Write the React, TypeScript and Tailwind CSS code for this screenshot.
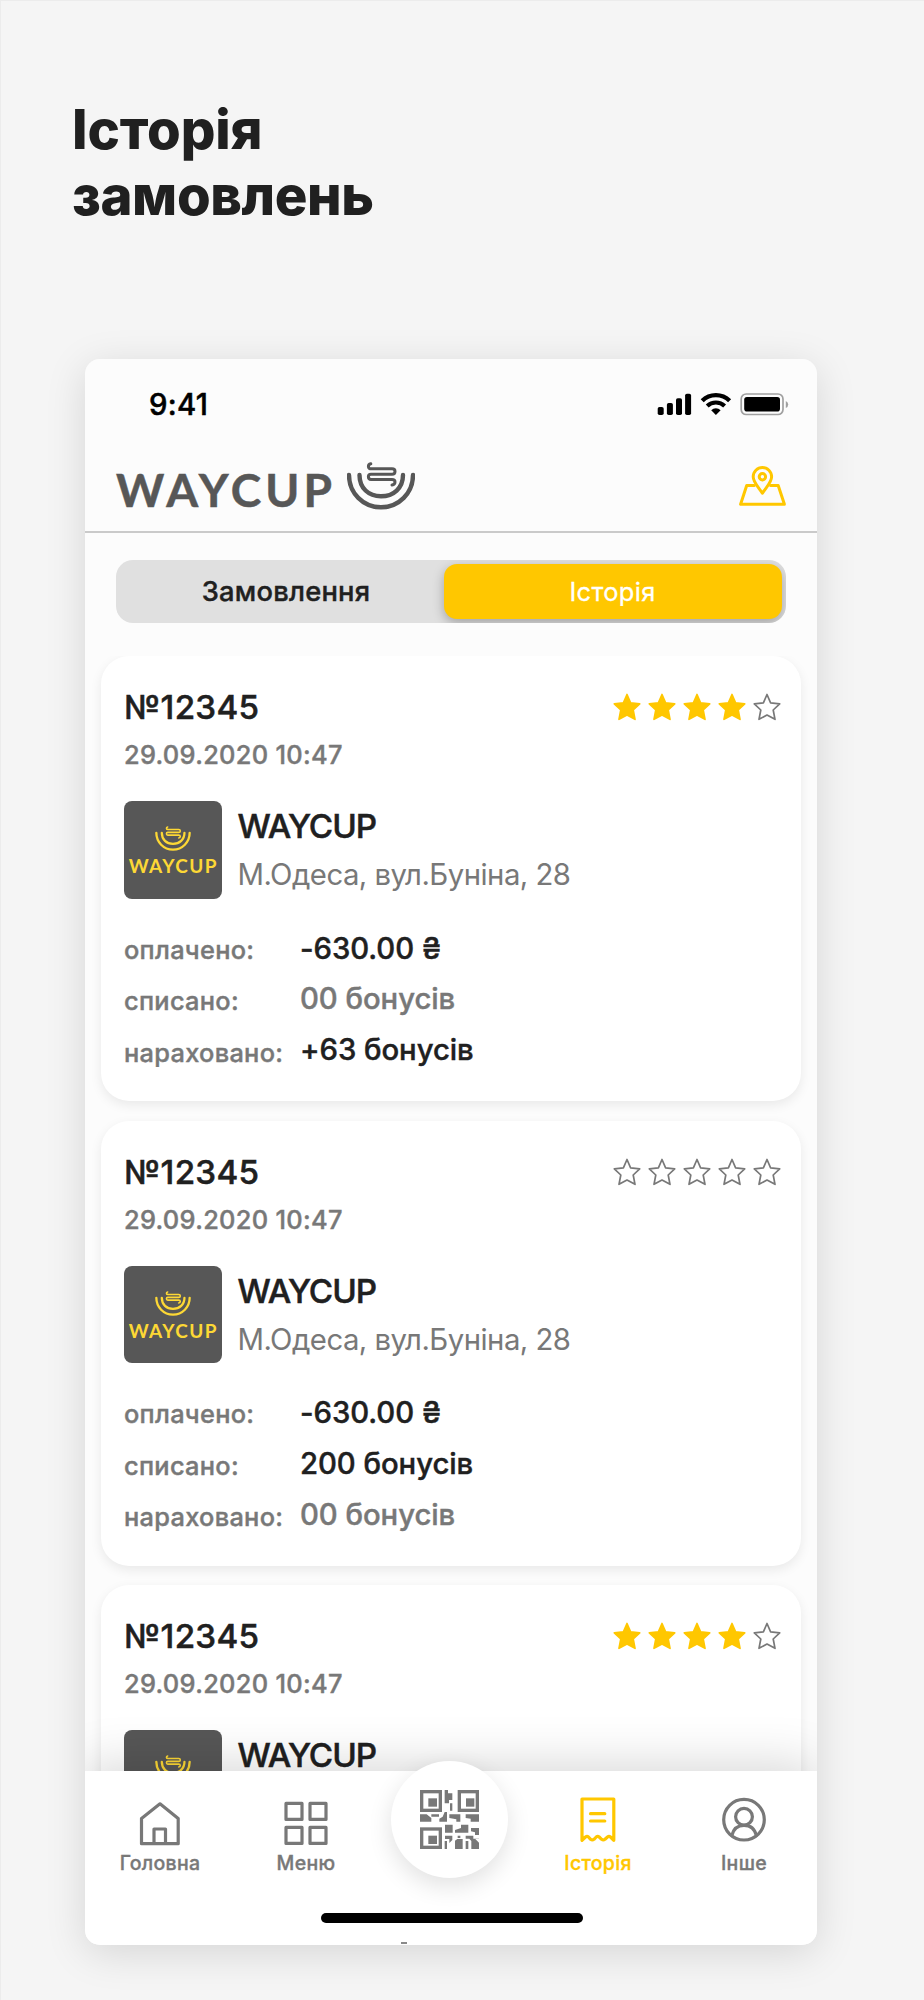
import React, { type ReactNode } from "react";

const GREY = "#787878";
const YELLOW = "#ffc700";

type Order = {
  number: string;
  date: string;
  rating: number;
  address?: string;
  paid?: string;
  spent?: string;
  earned?: string;
};

const orders: Order[] = [
  { number: "№12345", date: "29.09.2020 10:47", rating: 4, address: "М.Одеса, вул.Буніна, 28", paid: "-630.00 ₴", spent: "00 бонусів", earned: "+63 бонусів" },
  { number: "№12345", date: "29.09.2020 10:47", rating: 0, address: "М.Одеса, вул.Буніна, 28", paid: "-630.00 ₴", spent: "200 бонусів", earned: "00 бонусів" },
  { number: "№12345", date: "29.09.2020 10:47", rating: 4 },
];

function CupMark({ className, color }: { className: string; color: string }) {
  return (
    <svg viewBox="0 0 68 48" className={className} fill="none" stroke={color} strokeLinecap="round" strokeLinejoin="round">
      <path d="M2 13 C2 31 16 45.300 34 45.300 C52 45.300 66 31 66 13" strokeWidth="4.400" />
      <path d="M12.500 13 C12.500 26 21.500 34.300 34 34.300 C46.500 34.300 56 26 56 13" strokeWidth="4.400" />
      <path d="M23.800 1.800 C20.500 2.500 20.500 6.800 24.500 6.800 H45 C49 6.800 49 12.200 45 12.200 H24 C20.500 12.200 20.500 17.500 24 17.500 H45 C49 17.500 49 22.500 45 23" strokeWidth="3" />
    </svg>
  );
}

function Star({ filled }: { filled: boolean }) {
  return (
    <svg viewBox="0 0 28 28" className="size-7" fill={filled ? YELLOW : "none"} stroke={filled ? YELLOW : GREY} strokeWidth="1.700" strokeLinejoin="round">
      <path d="M14 1.500 L17.600 9.800 L26.700 10.900 L20.200 17 L22 26.300 L14 22 L6 26.300 L7.800 17 L1.300 10.900 L10.400 9.800 Z" />
    </svg>
  );
}

function StatusIcons() {
  return (
    <svg viewBox="0 0 132 25" className="h-[25px] w-[132px]">
      <rect x="0.700" y="16" width="6" height="8" rx="1.800" />
      <rect x="9.900" y="12" width="6" height="12" rx="1.800" />
      <rect x="19" y="7.300" width="6" height="16.700" rx="1.800" />
      <rect x="28.100" y="2.800" width="6" height="21.200" rx="1.800" />
      <path d="M45.200 9.800 A19.400 19.400 0 0 1 72.600 9.800" fill="none" stroke="#000" strokeWidth="4.300" />
      <path d="M50.200 15 A12.300 12.300 0 0 1 67.600 15" fill="none" stroke="#000" strokeWidth="4" />
      <path d="M54.200 19.300 A6.700 6.700 0 0 1 63.600 19.300 L58.900 24 Z" />
      <rect x="84.200" y="3" width="41.800" height="20.500" rx="5" fill="none" stroke="#a0a0a0" strokeWidth="1.700" />
      <rect x="87.200" y="6" width="35.800" height="14.600" rx="2.800" />
      <path d="M128.800 10 Q131.200 11 131.200 13.500 Q131.200 16 128.800 17 Z" fill="#a0a0a0" />
    </svg>
  );
}

function MapIcon() {
  return (
    <svg viewBox="0 0 47 40" className="mb-[7px] h-10 w-[47px]" fill="none" stroke={YELLOW} strokeWidth="3" strokeLinejoin="round" strokeLinecap="round">
      <path d="M23.400 27.300 C20.300 22 14.200 16.500 14.200 10.700 A9.200 9.200 0 0 1 32.600 10.700 C32.600 16.500 26.500 22 23.400 27.300 Z" />
      <circle cx="23.400" cy="10.800" r="3.200" />
      <path d="M15.200 19.500 H7.700 L1.600 38.300 H45.400 L39.200 19.500 H31.600" />
    </svg>
  );
}

function OrderCard({ order }: { order: Order }) {
  const tone = (v?: string) => (v?.startsWith("00") ? "text-[#787878]" : "text-[#202020]");
  return (
    <article className="h-[445px] shrink-0 rounded-[28px] bg-white px-[23px] pt-[31px] shadow-[0_4px_12px_rgba(0,0,0,0.08)]">
      <div className="flex items-center justify-between">
        <h2 className="text-[33.200px] font-medium leading-[40px] tracking-[0.250px] text-[#202020] [-webkit-text-stroke:0.500px_currentColor]">{order.number}</h2>
        <div className="-mr-[2.500px] flex gap-[6.800px]">
          {[1, 2, 3, 4, 5].map((n) => (
            <Star key={n} filled={n <= order.rating} />
          ))}
        </div>
      </div>
      <p className="mt-[12px] text-[25.400px] font-medium leading-[32px] tracking-[0.300px] text-[#787878] [-webkit-text-stroke:0.400px_currentColor]">{order.date}</p>
      <div className="mt-[30px] flex">
        <div className="flex size-[97.500px] shrink-0 flex-col items-center rounded-[8px] bg-[#575757] pt-[25px]">
          <CupMark className="h-[25px] w-[36px] shrink-0" color="#fdd835" />
          <span className="mt-[5px] pl-[1px] font-[Lato] text-[19px] font-bold leading-[20px] tracking-[1.400px] text-[#fdd835]">WAYCUP</span>
        </div>
        <div className="ml-[16px]">
          <h3 className="mt-[5px] text-[33.200px] font-medium leading-[40px] tracking-[-0.950px] text-[#202020] [-webkit-text-stroke:0.500px_currentColor]">WAYCUP</h3>
          {order.address && <p className="mt-[11px] text-[29.300px] leading-[36px] tracking-[-0.520px] text-[#787878]">{order.address}</p>}
        </div>
      </div>
      {order.paid && (
        <div className="mt-[25px] flex">
          <div className="w-[176px] text-[25.400px] font-medium leading-[51.600px] tracking-[0.280px] text-[#787878] [-webkit-text-stroke:0.400px_currentColor]">
            <p>оплачено:</p>
            <p>списано:</p>
            <p>нараховано:</p>
          </div>
          <div className="text-[29.300px] font-medium leading-[50.800px] tracking-[-0.050px] [-webkit-text-stroke:0.400px_currentColor]">
            <p className={tone(order.paid)}>{order.paid}</p>
            <p className={tone(order.spent)}>{order.spent}</p>
            <p className={tone(order.earned)}>{order.earned}</p>
          </div>
        </div>
      )}
    </article>
  );
}

function NavItem({ label, viewBox, active, children }: { label: string; viewBox: string; active?: boolean; children: ReactNode }) {
  return (
    <div className={active ? "flex flex-col items-center text-[#ffc700]" : "flex flex-col items-center text-[#787878]"}>
      <svg viewBox={viewBox} className="h-[50px] w-11" fill="none" stroke="currentColor" strokeWidth="3.200" strokeLinejoin="round" strokeLinecap="round">
        {children}
      </svg>
      <span className="mt-[5px] text-[19.500px] font-medium leading-6 tracking-[0.300px] [-webkit-text-stroke:0.350px_currentColor]">{label}</span>
    </div>
  );
}

function QrIcon() {
  return (
    <svg viewBox="0 0 177 177" className="size-[59px]" fill={GREY}>
      <g fill="none" stroke={GREY} strokeWidth="10">
        <rect x="5" y="5" width="56" height="56" />
        <rect x="118" y="5" width="54" height="56" />
        <rect x="5" y="117" width="56" height="55" />
      </g>
      <rect x="25" y="25" width="26" height="25" />
      <rect x="138" y="25" width="25" height="25" />
      <rect x="25" y="137" width="26" height="25" />
      <path d="M74 0 H84 V10 H97 V30 H87 V40 H74 Z M90 40 H97 V62 H90 Z" />
      <path d="M0 73 H20 L34 84 V95 H0 Z M34 73 H57 V80 H34 Z M58 86 L68 80 L74 66 H81 V95 H58 Z M88 73 H121 V95 H109 V88 L88 84 Z M137 73 H177 V95 H152 V86 L137 84 Z" />
      <path d="M75 104 H98 V128 H75 Z M123 104 H145 V128 H105 V120 L123 114 Z M153 114 H177 V135 H165 V127 L153 124 Z" />
      <path d="M75 137 H97 V150 L88 159 V147 H75 Z M74 153 H81 V177 H74 Z M105 152 L112 147 H128 V177 H105 Z M113 137 H121 V144 H113 Z M137 153 H145 V177 H137 Z M137 137 H160 V146 H177 V177 H154 V153 L148 146 H137 Z" />
      <path d="M166 147 L177 158 V147 Z" fill="#fff" />
    </svg>
  );
}

export default function App() {
  return (
    <main className="h-[2000px] w-[924px] overflow-hidden bg-[#f5f5f5] font-[Inter,sans-serif] shadow-[inset_1px_1px_0_#ececec]">
      <h1 className="h-[359px] pl-[72px] pt-[96px] text-[54.500px] font-extrabold leading-[66px] text-[#202020]">
        <span className="block tracking-[-0.100px]">Історія</span>
        <span className="block tracking-[-0.400px]">замовлень</span>
      </h1>
      <div className="ml-[85px] w-[732px] rounded-[15px] shadow-[0_8px_40px_rgba(0,0,0,0.13)]">
        <div className="relative flex h-[1586px] flex-col overflow-hidden rounded-[15px] bg-[#fcfcfc]">
          <div className="flex h-[88px] shrink-0 items-center justify-between pl-[64px] pr-[28px]">
            <span className="pt-[4px] text-[29.300px] font-medium tracking-[0.300px] text-black [-webkit-text-stroke:0.500px_currentColor]">9:41</span>
            <StatusIcons />
          </div>
          <div className="flex h-[86px] shrink-0 items-center justify-between border-b-2 border-[#cacaca] px-[31px]">
            <div className="flex">
              <span className="pt-[1px] font-[Lato] text-[46px] font-bold leading-[48px] tracking-[4.100px] text-[#575757] [-webkit-text-stroke:0.500px_#575757]">WAYCUP</span>
              <CupMark className="-mt-[3px] ml-[11px] h-12 w-[68px]" color="#575757" />
            </div>
            <MapIcon />
          </div>
          <div className="mx-[31px] mt-[27px] flex h-[63px] shrink-0 overflow-hidden rounded-[17px] bg-[#e0e0e0] p-1">
            <div className="flex-1 pl-[8px] text-center text-[27.300px] font-medium leading-[56px] tracking-[0.250px] text-[#202020] [-webkit-text-stroke:0.400px_currentColor]">Замовлення</div>
            <div className="w-[338px] rounded-[13px] bg-[#ffc700] text-center text-[25.400px] leading-[56px] tracking-[0.350px] text-white shadow-[0_4px_12px_rgba(0,0,0,0.28)]">
              <span className="-ml-[1px] [-webkit-text-stroke:0.300px_#fff]">Історія</span>
            </div>
          </div>
          <div className="mt-[33px] flex flex-1 flex-col gap-[19.600px] overflow-hidden px-4">
            {orders.map((order, i) => (
              <OrderCard key={i} order={order} />
            ))}
          </div>
          <nav className="relative h-[174px] shrink-0 bg-white pt-[25px] shadow-[0_-6px_48px_rgba(0,0,0,0.16)]">
            <div className="absolute left-[306px] top-[-10px] flex size-[117px] items-center justify-center rounded-full bg-white shadow-[0_8px_24px_rgba(0,0,0,0.12)]">
              <QrIcon />
            </div>
            <div className="grid grid-cols-5 pl-[2px]">
              <NavItem label="Головна" viewBox="0 -4 44 50">
                <path d="M3.500 43.700 V18.500 L22 3.800 L40.200 18.500 V43.700 Z M16 43.700 V29 H27.500 V43.700" />
              </NavItem>
              <NavItem label="Меню" viewBox="0 -4 44 50">
                <path d="M2 3.400 H18 V19.400 H2 Z M26 3.400 H42 V19.400 H26 Z M2 27.400 H18 V43.400 H2 Z M26 27.400 H42 V43.400 H26 Z" />
              </NavItem>
              <div />
              <NavItem label="Історія" viewBox="0 0 44 50" active>
                <path d="M6 44.300 V3 H37.800 V44.300 L34.500 41 Q33 39.800 31.500 41 L29 43.300 Q27.300 44.500 25.600 43.300 L23.200 41 Q21.700 39.800 20.200 41 L18 43.300 Q16.300 44.500 14.600 43.300 L12.500 41 Q11 39.800 9.500 41 Z" />
                <path d="M14.500 17.700 H28.800 M14.500 25 H28.800" />
              </NavItem>
              <NavItem label="Інше" viewBox="0 0 44 50">
                <circle cx="22" cy="23.700" r="20.300" />
                <circle cx="22" cy="20.700" r="8.400" />
                <path d="M9.800 39.500 C11.500 32.500 16 29.300 22 29.300 S32.700 32.500 34.300 39.500" />
              </NavItem>
            </div>
            <div className="ml-[236px] mt-[38px] h-[10px] w-[262px] rounded-full bg-black" />
            <div className="absolute bottom-[1px] left-[316px] h-[2px] w-[6px] bg-[#8a8a8a]" />
          </nav>
        </div>
      </div>
    </main>
  );
}
